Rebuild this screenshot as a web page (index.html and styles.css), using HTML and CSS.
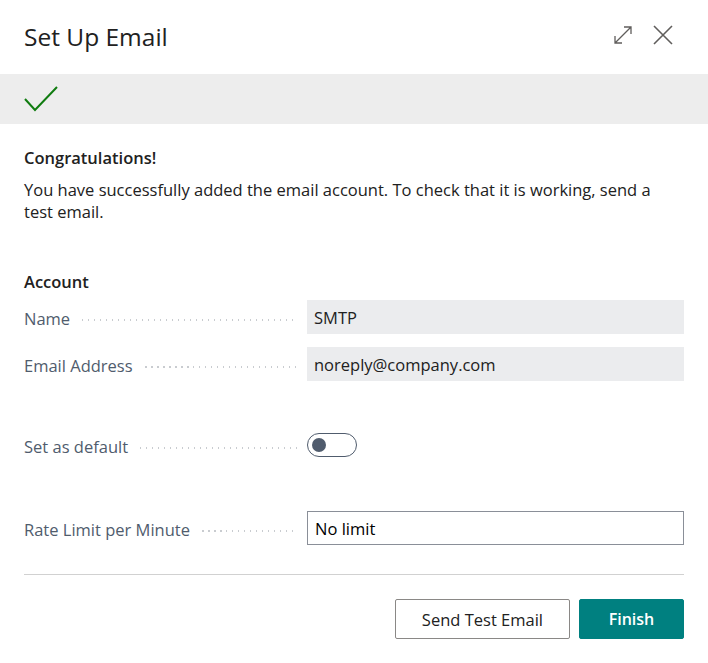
FILE: index.html
```html
<!DOCTYPE html>
<html lang="en">
<head>
  <meta charset="UTF-8">
  <title>Set Up Email</title>
  <link rel="stylesheet" href="styles.css">
</head>
<body>
  <div class="dialog">
    <!-- Header -->
    <div class="header">
      <h1>Set Up Email</h1>
      <div class="header-icons">
        <svg width="20" height="20" viewBox="0 0 20 20" fill="none" stroke="#605e5c" stroke-width="1.3">
          <path d="M2 18 L18 2 M11 2 H18 V9 M2 11 V18 H9"/>
        </svg>
        <svg width="22" height="22" viewBox="0 0 22 22" fill="none" stroke="#605e5c" stroke-width="1.6">
          <path d="M2 2 L20 20 M20 2 L2 20"/>
        </svg>
      </div>
    </div>

    <!-- Status band -->
    <div class="status">
      <svg width="34" height="26" viewBox="0 0 34 26" fill="none" stroke="#107c10" stroke-width="2">
        <path d="M1 13 L11 24 L33 1"/>
      </svg>
    </div>

    <div class="content">
      <h2>Congratulations!</h2>
      <p class="intro">You have successfully added the email account. To check that it is working, send a test email.</p>

      <h2 class="group-title">Account</h2>
      <div class="field field-first">
        <span class="label">Name</span>
        <div class="value readonly">SMTP</div>
      </div>
      <div class="field">
        <span class="label">Email Address</span>
        <div class="value readonly">noreply@company.com</div>
      </div>

      <div class="field field-toggle">
        <span class="label">Set as default</span>
        <div class="toggle"><span class="knob"></span></div>
      </div>

      <div class="field field-rate">
        <span class="label">Rate Limit per Minute</span>
        <div class="value editable">No limit</div>
      </div>
    </div>

    <!-- Footer buttons -->
    <div class="footer">
      <button class="btn">Send Test Email</button>
      <button class="btn btn-primary">Finish</button>
    </div>
  </div>
</body>
</html>
```

FILE: styles.css
```css
* {
  margin: 0;
  padding: 0;
  box-sizing: border-box;
}

body {
  font-family: 'Segoe UI', 'Open Sans', sans-serif;
  background: #fff;
  color: #212121;
}

.dialog {
  width: 708px;
  height: 663px;
}

/* Header */
.header {
  height: 74px;
  display: flex;
  align-items: center;
  justify-content: space-between;
  padding: 0 34px 0 24px;
}

.header h1 {
  font-size: 24.5px;
  font-weight: 400;
  color: #212121;
  margin-top: -2px;
}

.header-icons {
  display: flex;
  align-items: center;
  gap: 19px;
  margin-top: -4px;
}

/* Check band */
.status {
  height: 50px;
  background: #ededed;
  display: flex;
  align-items: center;
  padding-left: 24px;
}

.content {
  padding: 22px 24px 0 24px;
}

.content h2 {
  font-size: 16.5px;
  font-weight: 600;
  color: #212121;
  line-height: 24px;
}

.intro {
  max-width: 640px;
  font-size: 16.5px;
  line-height: 22px;
  margin-top: 9px;
  color: #212121;
}

.group-title {
  margin-top: 47px;
}

/* Fields */
.field {
  display: flex;
  align-items: center;
  margin-top: 13px;
}

.field.field-first {
  margin-top: 6px;
}

.label {
  width: 283px;
  height: 24px;
  flex-shrink: 0;
  display: flex;
  align-items: center;
  font-size: 16.5px;
  line-height: 21px;
  color: #505c6d;
  padding: 3px 10px 0 0;
}

.label::after {
  content: "";
  flex: 1;
  height: 2px;
  margin-left: 12px;
  margin-top: 3px;
  background: repeating-linear-gradient(to right, #c9ccd0 0 1.5px, transparent 1.5px 6px);
}

.value {
  flex: 1;
  height: 34px;
  display: flex;
  align-items: center;
  padding-left: 7px;
  font-size: 16.5px;
  color: #212121;
}

.readonly {
  background: #ebecee;
}

.editable {
  border: 1px solid #8a8f98;
  color: #000;
}

.field.field-toggle {
  margin-top: 52px;
}

.toggle {
  width: 50px;
  height: 24px;
  border: 1px solid #505c6d;
  border-radius: 12px;
  position: relative;
}

.knob {
  position: absolute;
  left: 4px;
  top: 4px;
  width: 14px;
  height: 14px;
  border-radius: 50%;
  background: #505c6d;
}

.field.field-rate {
  margin-top: 54px;
}

/* Footer */
.footer {
  margin: 29px 24px 0 24px;
  border-top: 1px solid #d1d1d1;
  padding-top: 24px;
  display: flex;
  justify-content: flex-end;
  gap: 9px;
}

.btn {
  height: 40px;
  padding: 0 26px;
  font-family: inherit;
  font-size: 16.5px;
  background: #fff;
  color: #212121;
  border: 1px solid #8a8886;
  border-radius: 2px;
  min-width: 105px;
}

.btn-primary {
  background: #008080;
  color: #fff;
  border-color: #008080;
  font-size: 16px;
  font-weight: 600;
  padding: 0 24px;
}
```
